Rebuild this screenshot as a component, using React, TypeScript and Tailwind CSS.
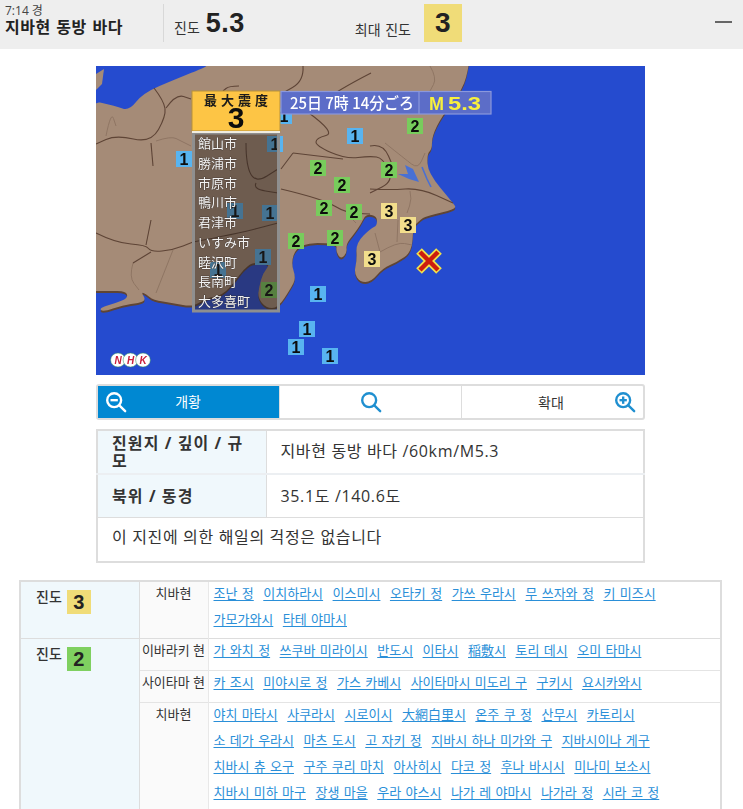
const font = { fontFamily: '"Open Sans", "Noto Sans CJK KR", sans-serif' };
const jp = '"Noto Sans CJK JP", sans-serif';
const arial = "Liberation Sans, sans-serif";

const LAND =
  "120,-12 373,-12 373,0 367,23 346,50 336,70 336,83 331,88 332,107 357,137 361,143 330,150 324,154 317,161 316,186 301,196 287,202 275,216 264,216 258,207 261,194 260,177 275,162 281,160 281,150 270,148 265,158 258,168 250,178 251,187 245,193 240,186 241,178 230,177 213,177 200,182 195,197 200,212 195,222 182,242 170,242 162,232 163,221 167,207 175,197 157,196 147,204 140,214 127,229 110,232 97,241 77,237 57,234 50,228 45,226 50,234 43,237 27,239 7,246 3,242 20,237 32,232 30,225 13,225 -12,225 -12,33 20,40 33,45 47,27 80,13 100,5 112,0";

const BORDERS = [
  "58,22 68,35 70,50 55,77 20,69 0,78",
  "70,42 80,28 95,33",
  "55,77 57,100",
  "143,20 133,20 127,25",
  "207,0 208,15 185,28",
  "275,7 240,25 213,47 183,48",
  "213,47 240,67 220,72 220,80 250,93 274,90 287,92 298,115 274,127",
  "197,87 185,103",
  "197,87 247,93",
  "185,123 227,133 250,147 274,148",
  "274,123 294,124 324,122 357,137",
  "274,80 287,77 298,103",
  "150,77 150,100 160,117 182,103",
  "160,117 157,123 182,127",
  "0,167 20,177 50,179 55,186 77,184 97,176",
  "50,179 55,154",
  "55,186 37,197",
  "97,176 140,168 182,157",
];

const THIN = [
  "10,70 15,45 20,60",
  "60,75 75,70 85,75 95,80",
  "334,0 341,12 334,25",
  "289,77 309,93 322,103 329,87",
  "314,125 316,133 311,147",
  "279,167 284,186",
  "284,186 301,176 316,179",
  "301,176 302,154",
  "37,197 33,211 43,224",
  "77,184 60,227",
  "250,147 260,157",
];

const BADGES: [number, number, string][] = [
  [188, 50, "1"],
  [259, 70, "1"],
  [88, 93, "1"],
  [179, 78, "1"],
  [174, 147, "1"],
  [139, 145, "1"],
  [167, 191, "1"],
  [122, 204, "1"],
  [222, 228, "1"],
  [211, 263, "1"],
  [200, 281, "1"],
  [234, 290, "1"],
  [319, 60, "2"],
  [222, 102, "2"],
  [246, 119, "2"],
  [293, 104, "2"],
  [228, 142, "2"],
  [258, 146, "2"],
  [200, 175, "2"],
  [239, 172, "2"],
  [173, 224, "2"],
  [293, 145, "3"],
  [312, 159, "3"],
  [276, 193, "3"],
];

const BADGE_COLOR: Record<string, string> = {
  "1": "#58b4f0",
  "2": "#78cc5c",
  "3": "#f2de8c",
};

const CITIES = ["館山市", "勝浦市", "市原市", "鴨川市", "君津市", "いすみ市", "睦沢町", "長南町", "大多喜町"];

// rounds off the corners of a point list, the map is soft in the reference
function smooth(points: string, closed = false) {
  const pts = points.split(" ").map((p) => p.split(",").map(Number));
  const mid = (a: number[], b: number[]) => `${(a[0] + b[0]) / 2} ${(a[1] + b[1]) / 2}`;
  if (closed) {
    let d = `M${mid(pts[pts.length - 1], pts[0])}`;
    pts.forEach((p, i) => {
      d += ` Q${p[0]} ${p[1]} ${mid(p, pts[(i + 1) % pts.length])}`;
    });
    return d + "Z";
  }
  let d = `M${pts[0][0]} ${pts[0][1]}`;
  for (let i = 1; i < pts.length - 1; i++) {
    d += ` Q${pts[i][0]} ${pts[i][1]} ${mid(pts[i], pts[i + 1])}`;
  }
  const last = pts[pts.length - 1];
  return d + ` L${last[0]} ${last[1]}`;
}

function QuakeMap() {
  const land = smooth(LAND, true);
  return (
    <svg width="549" height="309" viewBox="0 0 549 309" className="block">
      <defs>
        <filter id="soft">
          <feGaussianBlur stdDeviation="0.35" />
        </filter>
      </defs>
      <rect width="549" height="309" fill="#254bcf" />
      <g filter="url(#soft)">
        <polygon points="0,8 8,3 6,18 0,24" fill="#a58b77" />
        <path d={land} fill="#5e4436" transform="translate(0,2)" />
        <path d={land} fill="#a58b77" />
        {THIN.map((p) => (
          <path key={p} d={smooth(p)} fill="none" stroke="#8c7361" strokeWidth="0.9" />
        ))}
        {BORDERS.map((p) => (
          <path key={p} d={smooth(p)} fill="none" stroke="#5e4436" strokeWidth="1.1" />
        ))}
        <polygon points="309,99 317,103 323,116 313,113 302,108 312,108" fill="#4a70d4" />
        <polyline points="326,101 331,113 335,121" fill="none" stroke="#4a70d4" strokeWidth="1.6" />
        {BADGES.map(([x, y, n], i) => (
          <g key={i}>
            <rect x={x - 8} y={y - 8} width="16" height="16" fill={BADGE_COLOR[n]} />
            <text x={x} y={y + 6} textAnchor="middle" fontSize="16" fontWeight="700" fontFamily={arial} fill="#0a0a0a">
              {n}
            </text>
          </g>
        ))}
        {/* epicenter */}
        <path d="M323 185 L343 205 M343 185 L323 205" stroke="#f2e04a" strokeWidth="8" />
        <path d="M324 186 L342 204 M342 186 L324 204" stroke="#cc1a08" strokeWidth="4.4" />
        {/* city list panel */}
        <rect x="97.5" y="67" width="85" height="178" fill="#2c2420" fillOpacity="0.45" stroke="#8f8f8f" strokeWidth="3" />
        {CITIES.map((c, i) => (
          <text key={c} x="102" y={82 + i * 19.75} fontSize="13" fontFamily={jp} fill="#f2f2f2" stroke="#3a322e" strokeWidth="0.5" paintOrder="stroke">
            {c}
          </text>
        ))}
        {/* max intensity header */}
        <rect x="96" y="25" width="88" height="40" fill="#fdc544" stroke="#b7913a" strokeWidth="1" />
        <rect x="96" y="65" width="88" height="2" fill="#f0ece0" />
        <text x="140" y="39" textAnchor="middle" fontSize="13" fontWeight="700" fontFamily={jp} fill="#1a1a1a" textLength={64} lengthAdjust="spacing">
          最大震度
        </text>
        <text x="140" y="62" textAnchor="middle" fontSize="30" fontWeight="700" fontFamily={arial} fill="#0a0a0a">
          3
        </text>
        {/* time and magnitude */}
        <rect x="185" y="25.5" width="210" height="22.5" fill="#5b6dc8" stroke="#8b98dc" strokeWidth="1.2" />
        <line x1="323" y1="26" x2="323" y2="48" stroke="#8b98dc" strokeWidth="1.2" />
        <text x="194" y="43" fontSize="16" fontWeight="500" fontFamily={jp} fill="#ffffff" textLength={124} lengthAdjust="spacingAndGlyphs">
          25日 7時 14分ごろ
        </text>
        <text x="333" y="43.5" fontSize="18" fontWeight="700" fontFamily={arial} fill="#f8f03c">
          M
        </text>
        <text x="352" y="43.5" fontSize="18" fontWeight="700" fontFamily={arial} fill="#f8f03c" textLength={33} lengthAdjust="spacingAndGlyphs">
          5.3
        </text>
        {/* logo */}
        {[22, 34.5, 47].map((x, i) => (
          <g key={x}>
            <ellipse cx={x} cy="294" rx="7.4" ry="7" fill="#ffffff" stroke="#2a8c5a" strokeWidth="0.5" />
            <text x={x} y="297.5" textAnchor="middle" fontSize="10" fontWeight="700" fontStyle="italic" fontFamily={arial} fill="#c8203c">
              {"NHK"[i]}
            </text>
          </g>
        ))}
      </g>
    </svg>
  );
}

function Magnifier({ kind, color }: { kind: "minus" | "plain" | "plus"; color: string }) {
  return (
    <svg width="22" height="22" viewBox="0 0 24 24" fill="none" stroke={color} strokeWidth="2.6">
      <circle cx="10" cy="10" r="7.6" />
      <path d="M15.6 15.6 L22 22" strokeLinecap="round" />
      {kind !== "plain" && <path d="M6 10 H14" />}
      {kind === "plus" && <path d="M10 6 V14" />}
    </svg>
  );
}

const LINKS_3 = [
  ["조난 정", "이치하라시", "이스미시", "오타키 정", "가쓰 우라시", "무 쓰자와 정", "키 미즈시"],
  ["가모가와시", "타테 야마시"],
];
const LINKS_IBARAKI = [["가 와치 정", "쓰쿠바 미라이시", "반도시", "이타시", "稲敷시", "토리 데시", "오미 타마시"]];
const LINKS_SAITAMA = [["카 조시", "미야시로 정", "가스 카베시", "사이타마시 미도리 구", "구키시", "요시카와시"]];
const LINKS_CHIBA = [
  ["야치 마타시", "사쿠라시", "시로이시", "大網白里시", "온주 쿠 정", "산무시", "카토리시"],
  ["소 데가 우라시", "마츠 도시", "고 자키 정", "지바시 하나 미가와 구", "지바시이나 게구"],
  ["치바시 츄 오구", "구주 쿠리 마치", "아사히시", "다코 정", "후나 바시시", "미나미 보소시"],
  ["치바시 미하 마구", "장생 마을", "우라 야스시", "나가 레 야마시", "나가라 정", "시라 코 정"],
];

function LinkLines({ lines }: { lines: string[][] }) {
  return (
    <>
      {lines.map((line, i) => (
        <div key={i} className="flex gap-x-[9.5px] h-[26px] leading-[23px] whitespace-nowrap">
          {line.map((name) => (
            <a key={name} href="#" className="text-[13px] text-[#2a8fd8] underline underline-offset-2 [word-spacing:1px]">
              {name}
            </a>
          ))}
        </div>
      ))}
    </>
  );
}

function Level({ n, color }: { n: string; color: string }) {
  return (
    <div className="flex items-start pl-[15px] pt-[8px] gap-[5px]">
      <span className="text-[14px] font-medium text-[#333] leading-[14px]">진도</span>
      <span className={`w-[24px] h-[24px] flex items-center justify-center text-[20px] font-bold text-[#222] ${color}`} style={{ fontFamily: arial }}>
        {n}
      </span>
    </div>
  );
}

export default function App() {
  return (
    <div className="h-[809px] overflow-hidden bg-white text-[#333]" style={font}>
      <header className="h-[49px] bg-[#eeeeee] flex relative">
        <div className="w-[164px] h-[38px] mt-[4px] pl-[5px] border-r border-[#d8d8d8]">
          <div className="text-[12px] leading-[13px] text-[#444]">7:14 경</div>
          <h1 className="text-[16px] leading-[20px] font-bold text-[#222] [word-spacing:1px] tracking-[0.5px]">지바현 동방 바다</h1>
        </div>
        <div className="flex items-center pl-[10px] h-[46px] gap-[6px]">
          <span className="text-[14px] pt-[8px]">진도</span>
          <span className="text-[27px] font-bold text-[#222] tracking-[0.5px]" style={{ fontFamily: arial }}>
            5.3
          </span>
        </div>
        <div className="flex h-[42px] ml-[110px] mt-[4px]">
          <span className="text-[14px] leading-[38px] pt-[7px] w-[69px] [word-spacing:1px]">최대 진도</span>
          <span className="w-[38px] h-[38px] bg-[#f0dc78] flex items-center justify-center text-[28px] font-bold text-[#222]" style={{ fontFamily: arial }}>
            3
          </span>
        </div>
        <div className="absolute right-[11px] top-[21px] w-[17px] h-[1.5px] bg-[#666]" />
      </header>

      <main className="pt-[17px]">
        <div className="w-[549px] ml-[96px]">
          <QuakeMap />
          <div className="mt-[9px] h-[36px] flex border-2 border-[#dddddd] rounded-[3px] text-[14px]">
            <div className="w-[181px] bg-[#0088d2] text-white flex items-center justify-between pl-[7px]">
              <Magnifier kind="minus" color="#ffffff" />
              <span className="mr-[78px] -mt-[2px]">개황</span>
            </div>
            <div className="w-[182px] border-l border-[#dddddd] flex items-center justify-center">
              <Magnifier kind="plain" color="#1f8fd0" />
            </div>
            <div className="flex-1 border-l border-[#dddddd] flex items-center justify-between pr-[7px]">
              <span className="ml-[76px]">확대</span>
              <Magnifier kind="plus" color="#1f8fd0" />
            </div>
          </div>

          <table className="mt-[9px] w-full border-2 border-[#dddddd] border-collapse text-[16px] tracking-[0.65px]">
            <tbody>
              <tr className="h-[44px] border-b-2 border-[#eceff2]">
                <th className="w-[169px] bg-[#f0f8fc] border-r border-[#dddddd] pl-[14px] text-left font-bold text-[16px] tracking-[1.1px] leading-[18px]">
                  진원지 / 깊이 / 규<br />모
                </th>
                <td className="pl-[14px] pb-[2px]">지바현 동방 바다 /60km/M5.3</td>
              </tr>
              <tr className="h-[43px] border-b border-[#dddddd]">
                <th className="bg-[#f0f8fc] border-r border-[#dddddd] pl-[14px] text-left font-bold text-[16px] tracking-[1.1px]">북위 / 동경</th>
                <td className="pl-[14px]">35.1도 /140.6도</td>
              </tr>
              <tr className="h-[45px]">
                <td colSpan={2} className="pl-[14px] pb-[4px]">
                  이 지진에 의한 해일의 걱정은 없습니다
                </td>
              </tr>
            </tbody>
          </table>
        </div>

        <table className="mt-[17px] ml-[19px] w-[703px] table-fixed border-2 border-[#dddddd] border-collapse text-[13px]">
          <tbody>
            <tr className="border-b border-[#dddddd]">
              <td className="w-[119px] p-0 align-top bg-[#f0f8fc] border-r border-[#dddddd]">
                <Level n="3" color="bg-[#f0dc78]" />
              </td>
              <td className="w-[69px] p-0 align-top text-center leading-[23px] bg-[#fafafa] border-r border-[#e8e8e8]">치바현</td>
              <td className="px-[5px] pt-0 pb-[4px] align-top">
                <LinkLines lines={LINKS_3} />
              </td>
            </tr>
            <tr className="border-b border-[#e4e4e4]">
              <td rowSpan={3} className="p-0 align-top bg-[#f0f8fc] border-r border-[#dddddd]">
                <Level n="2" color="bg-[#7fd060]" />
              </td>
              <td className="p-0 align-top text-center leading-[23px] bg-[#fafafa] border-r border-[#e8e8e8] whitespace-nowrap">이바라키 현</td>
              <td className="px-[5px] pb-[5px] align-top">
                <LinkLines lines={LINKS_IBARAKI} />
              </td>
            </tr>
            <tr className="border-b border-[#e4e4e4]">
              <td className="p-0 align-top text-center leading-[23px] bg-[#fafafa] border-r border-[#e8e8e8] whitespace-nowrap">사이타마 현</td>
              <td className="px-[5px] pb-[5px] align-top">
                <LinkLines lines={LINKS_SAITAMA} />
              </td>
            </tr>
            <tr>
              <td className="p-0 align-top text-center leading-[23px] bg-[#fafafa] border-r border-[#e8e8e8]">치바현</td>
              <td className="px-[5px] pb-[6px] align-top">
                <LinkLines lines={LINKS_CHIBA} />
              </td>
            </tr>
          </tbody>
        </table>
      </main>
    </div>
  );
}
